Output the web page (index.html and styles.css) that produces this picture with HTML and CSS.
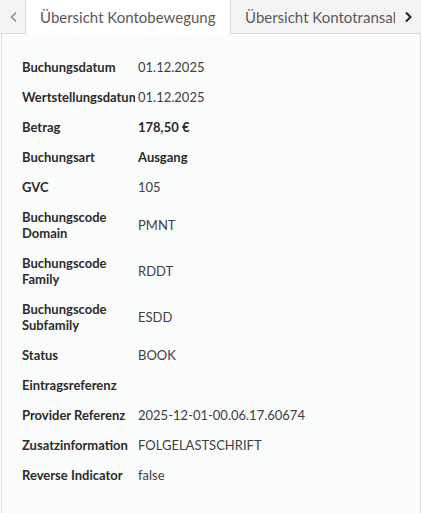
FILE: index.html
```html
<!DOCTYPE html>
<html lang="de">
<head>
<meta charset="utf-8">
<title>Übersicht Kontobewegung</title>
<link rel="stylesheet" href="styles.css">
</head>
<body>
<div class="tabs">
  <button class="scroll-btn left" aria-label="zurück">
    <svg width="10" height="12" viewBox="0 0 10 12"><path d="M7 1.5 L2.5 6 L7 10.5" fill="none" stroke="#7f8a96" stroke-width="1.4"/></svg>
  </button>
  <div class="tab active">Übersicht Kontobewegung</div>
  <div class="tab">Übersicht Kontotransaktion</div>
  <button class="scroll-btn right" aria-label="weiter">
    <svg width="10" height="12" viewBox="0 0 10 12"><path d="M3 1.5 L7.5 6 L3 10.5" fill="none" stroke="#222" stroke-width="2"/></svg>
  </button>
</div>
<div class="panel">
  <dl class="details">
    <dt>Buchungsdatum</dt><dd>01.12.2025</dd>
    <dt>Wertstellungsdatum</dt><dd>01.12.2025</dd>
    <dt>Betrag</dt><dd class="strong">178,50 €</dd>
    <dt>Buchungsart</dt><dd class="strong">Ausgang</dd>
    <dt>GVC</dt><dd>105</dd>
    <dt>Buchungscode Domain</dt><dd>PMNT</dd>
    <dt>Buchungscode Family</dt><dd>RDDT</dd>
    <dt>Buchungscode Subfamily</dt><dd>ESDD</dd>
    <dt>Status</dt><dd>BOOK</dd>
    <dt>Eintragsreferenz</dt><dd></dd>
    <dt>Provider Referenz</dt><dd>2025-12-01-00.06.17.60674</dd>
    <dt>Zusatzinformation</dt><dd>FOLGELASTSCHRIFT</dd>
    <dt>Reverse Indicator</dt><dd>false</dd>
  </dl>
</div>
</body>
</html>
```
FILE: styles.css
```css
html, body {
  margin: 0;
  padding: 0;
  background: #ffffff;
  font-family: Lato, "Noto Sans", sans-serif;
  color: #313131;
}
.tabs {
  position: relative;
  display: flex;
  height: 34px;
  overflow: hidden;
}
.scroll-btn {
  border: none;
  padding: 0;
  margin: 0;
  display: flex;
  align-items: center;
  justify-content: center;
  background: #f4f4f4;
  cursor: pointer;
}
.scroll-btn.left {
  flex: 0 0 26px;
  border-right: 1px solid #dcdcdc;
  border-bottom: 1px solid #dcdcdc;
  box-sizing: border-box;
  padding-left: 2px;
}
.scroll-btn.right {
  position: absolute;
  right: 0;
  top: 0;
  width: 26px;
  height: 33px;
  background: #f4f4f4;
}
.tab {
  flex: 0 0 auto;
  box-sizing: border-box;
  height: 34px;
  display: flex;
  align-items: center;
  padding: 0 14px;
  font-size: 15px;
  color: #5a5a5a;
  white-space: nowrap;
}
.tab.active {
  width: 204px;
  background: #ffffff;
}
.tab:not(.active) {
  background: #f4f4f4;
  border-left: 1px solid #dcdcdc;
  border-bottom: 1px solid #dcdcdc;
}
.panel {
  box-sizing: border-box;
  height: 479px;
  margin-left: 1px;
  border-left: 1px solid #dcdcdc;
  border-right: 1px solid #dcdcdc;
  background: #fbfcfc;
  padding: 25px 0 0 20px;
}
.details {
  margin: 0;
  display: grid;
  grid-template-columns: 116px auto;
  row-gap: 14px;
  align-items: center;
  font-size: 13px;
  line-height: 16px;
}
.details dt {
  font-weight: 700;
  color: #2b2b2b;
  overflow: hidden;
  white-space: normal;
  margin-right: 3px;
}
.details dd {
  margin: 0;
  color: #404040;
  white-space: nowrap;
}
.details dd.strong {
  font-weight: 700;
  color: #2b2b2b;
}
```
